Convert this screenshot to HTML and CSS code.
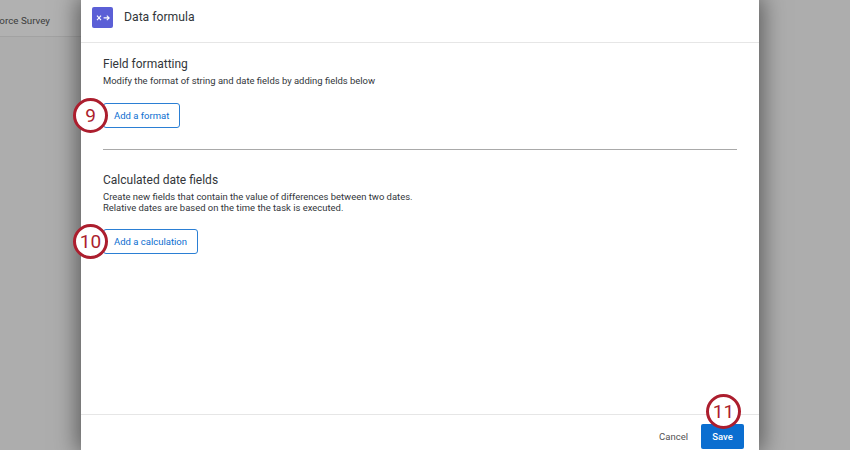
FILE: index.html
```html
<!DOCTYPE html>
<html lang="en">
<head>
<meta charset="utf-8">
<title>Data formula</title>
<link rel="stylesheet" href="styles.css">
</head>
<body>
<div class="stage">
  <div class="backdrop">
    <div class="backdrop-bar"><span class="backdrop-title">Workforce Survey</span></div>
  </div>
  <main class="modal">
    <header class="modal-head">
      <span class="modal-icon">
        <svg width="14" height="8" viewBox="0 0 14 8" fill="none" stroke="#fff" stroke-width="1.1">
          <path d="M1 1.6 5 6.2M5 1.6 1 6.2"/>
          <path d="M7.6 3.9h5.6M10.8 1.6l2.4 2.3-2.4 2.3"/>
        </svg>
      </span>
      <h1 class="modal-title">Data formula</h1>
    </header>
    <div class="modal-body">
      <section class="section section-first">
        <h2 class="section-title">Field formatting</h2>
        <p class="section-text">Modify the format of string and date fields by adding fields below</p>
        <div class="action">
          <button class="btn-outline">Add a format</button>
          <span class="callout callout-left">9</span>
        </div>
      </section>
      <hr class="divider">
      <section class="section">
        <h2 class="section-title">Calculated date fields</h2>
        <p class="section-text">Create new fields that contain the value of differences between two dates.<br>Relative dates are based on the time the task is executed.</p>
        <div class="action">
          <button class="btn-outline">Add a calculation</button>
          <span class="callout callout-left">10</span>
        </div>
      </section>
    </div>
    <footer class="modal-foot">
      <button class="btn-text">Cancel</button>
      <div class="save-wrap">
        <button class="btn-primary">Save</button>
        <span class="callout callout-top">11</span>
      </div>
    </footer>
  </main>
  <div class="backdrop backdrop-right"></div>
</div>
</body>
</html>
```
FILE: styles.css
```css
* { box-sizing: border-box; }
html, body { margin: 0; height: 100%; }
body { font-family: "Roboto", "Liberation Sans", sans-serif; color: #32363a; overflow: hidden; }
.stage { display: flex; width: 850px; height: 450px; background: #adadad; overflow: hidden; }
.backdrop { flex: 0 0 81px; min-width: 0; overflow: hidden; }
.backdrop-right { flex: 1 1 0; }
.backdrop-bar { height: 37px; border-bottom: 1px solid #a2a2a2; background: #b1b1b1; display: flex; justify-content: flex-end; align-items: center; padding: 5px 31px 0 0; }
.backdrop-title { font-size: 9.8px; white-space: nowrap; color: #3c3c3c; }
.modal { flex: 0 0 678px; height: 450px; background: #fff; display: flex; flex-direction: column; box-shadow: 0 0 22px 3px rgba(0,0,0,.5); position: relative; }
.modal-head { flex: 0 0 43px; display: flex; align-items: flex-start; gap: 11px; padding: 7px 10px 0 11px; border-bottom: 1px solid #e6e6e6; }
.modal-icon { width: 21px; height: 21px; border-radius: 2px; background: #5b5fd6; display: flex; align-items: center; justify-content: center; }
.modal-title { margin: 2px 0 0; font-size: 12.2px; line-height: 16px; font-weight: 400; color: #32363a; }
.modal-body { flex: 1 1 auto; padding: 0 22px; }
.section-first { padding-top: 14px; }
.section { display: flex; flex-direction: column; align-items: flex-start; }
.section-title { margin: 0; font-size: 12px; line-height: 15px; font-weight: 400; color: #32363a; }
.section-text { margin: 3px 0 0; font-size: 9.45px; line-height: 11px; color: #32363a; }
.action { position: relative; margin-top: 16px; display: flex; }
.section-first .action { margin-top: 17px; }
.btn-outline { height: 25px; padding: 0 10px; font: 400 9.5px "Roboto", "Liberation Sans", sans-serif; color: #0b6ed0; background: #fff; border: 1px solid #2b7fd4; border-radius: 3px; }
.divider { margin: 21px 0 0; border: 0; border-top: 1px solid #a9a9a9; }
.divider + .section { padding-top: 23px; }
.callout { position: absolute; width: 35px; height: 35px; border: 3px solid #ac1e2e; border-radius: 50%; background: #fff; color: #ac1e2e; font-size: 19px; display: flex; align-items: center; justify-content: center; }
.callout-left { left: -30px; top: -5px; }
.callout-top { left: 5px; top: -30px; }
.modal-foot { flex: 0 0 36px; display: flex; justify-content: flex-end; align-items: flex-start; gap: 13px; padding: 9px 15px 0 0; border-top: 1px solid #e6e6e6; }
.btn-text { height: 25px; padding: 0; margin: 0; background: none; border: 0; font: 400 9.5px "Roboto", "Liberation Sans", sans-serif; color: #525252; }
.save-wrap { position: relative; display: flex; }
.btn-primary { width: 43px; height: 25px; padding: 0; background: #0b6ed0; border: 0; border-radius: 2px; color: #fff; font: 500 9.5px "Roboto", "Liberation Sans", sans-serif; }
```
